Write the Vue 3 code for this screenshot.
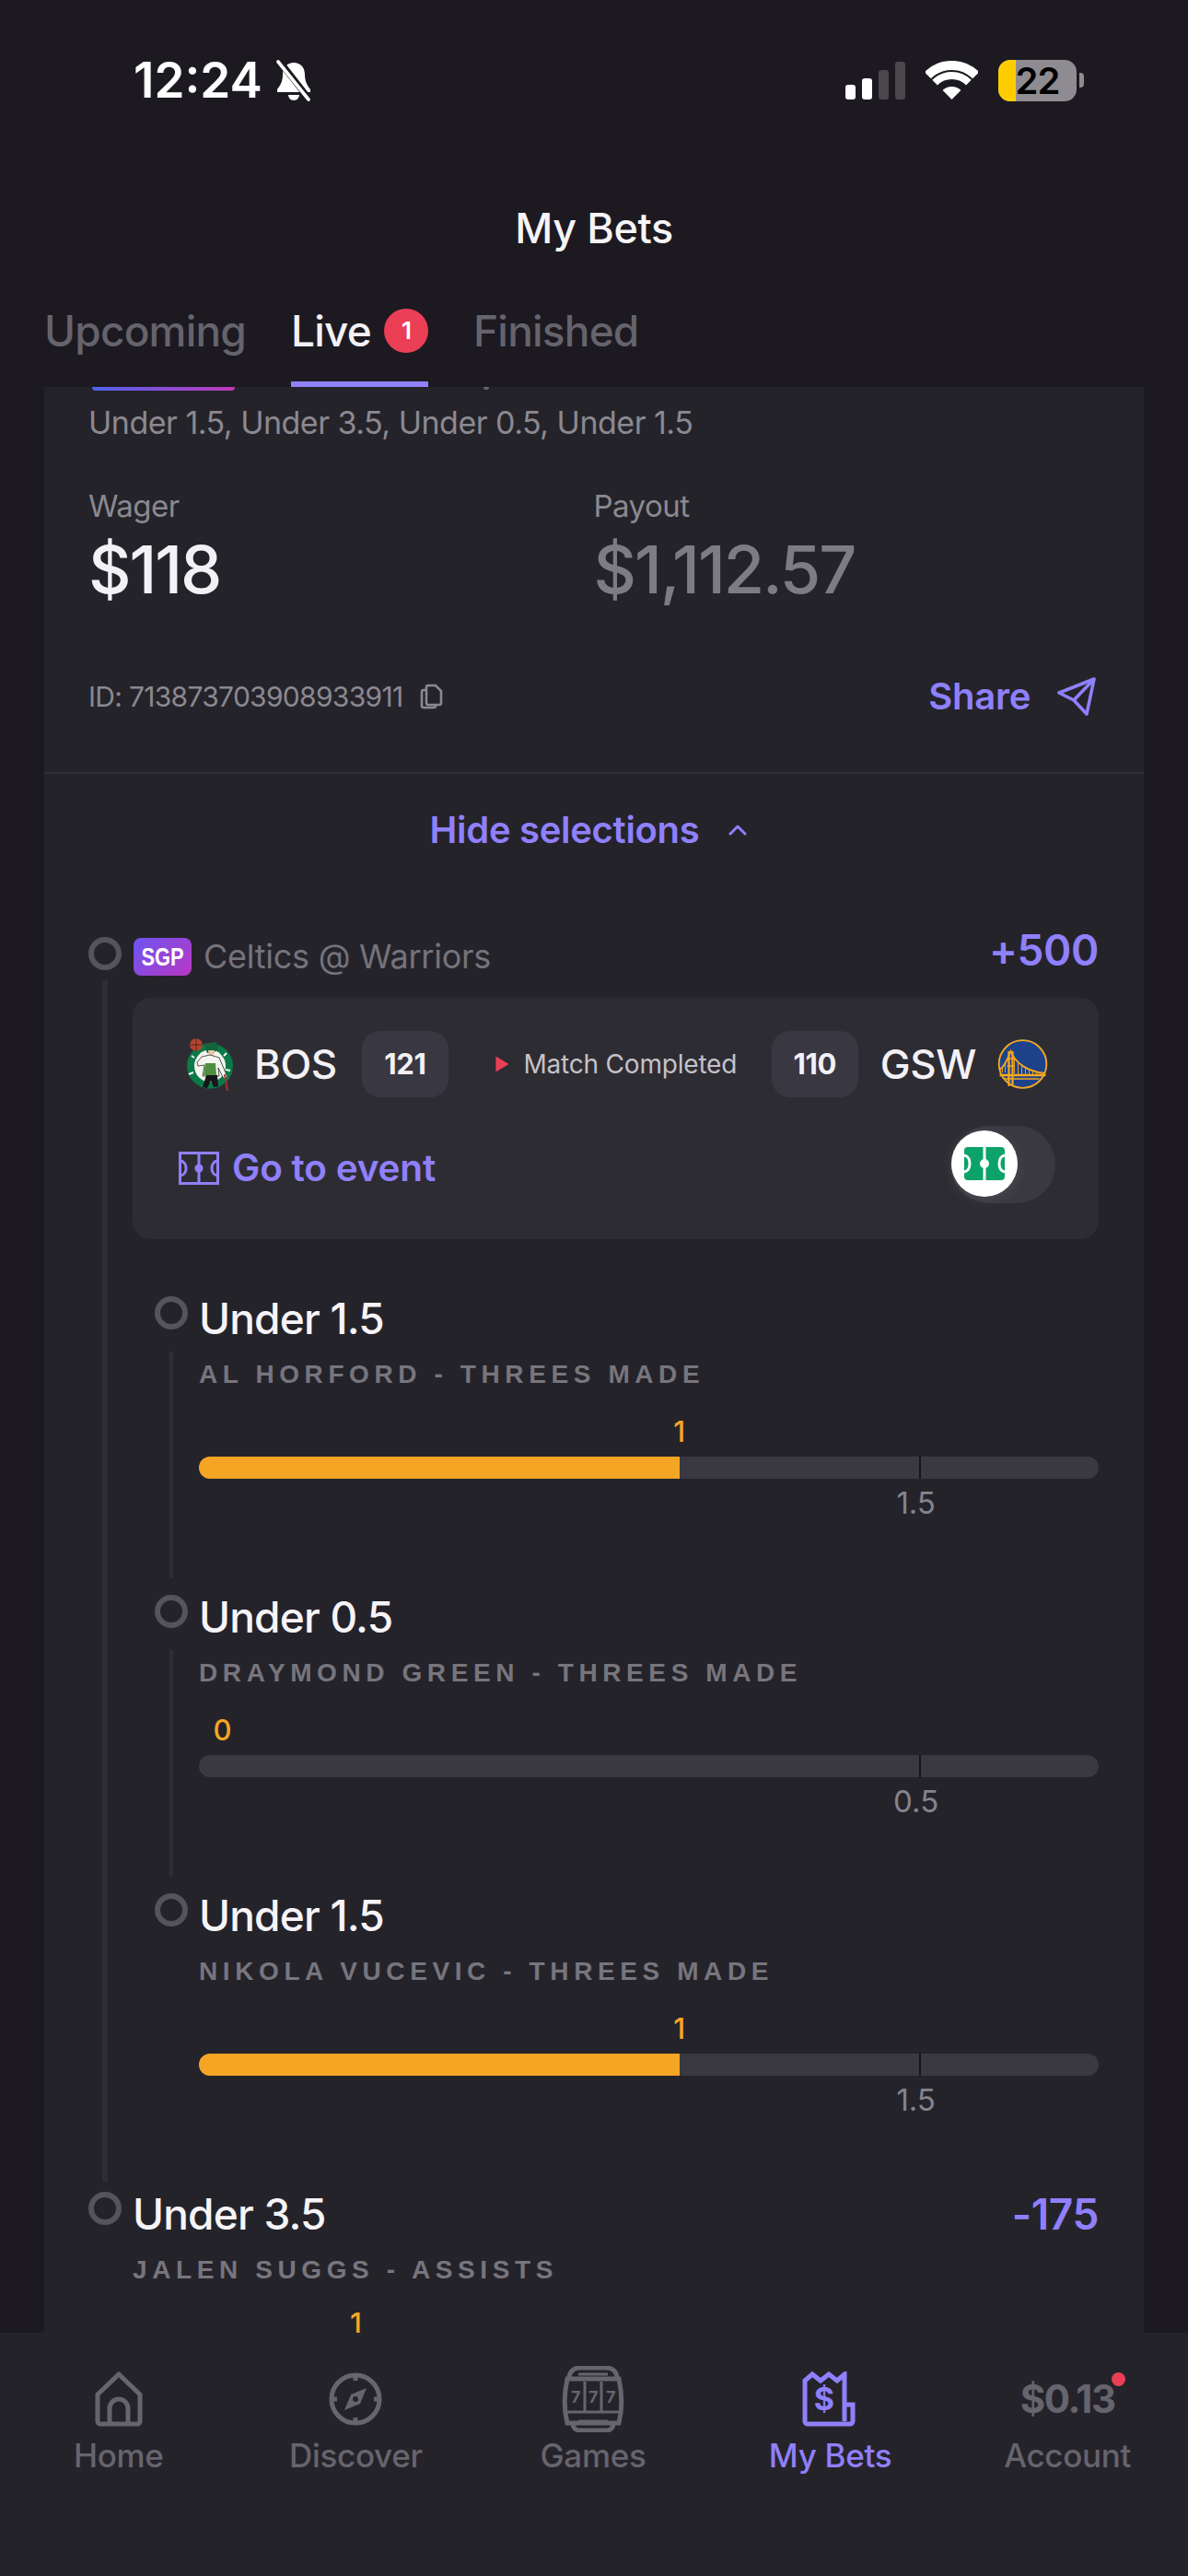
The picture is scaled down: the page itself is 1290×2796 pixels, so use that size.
<script setup>
const legs = [
  { line: 'Under 1.5', name: 'AL HORFORD - THREES MADE', value: '1', pct: 53.4, pos: 53.4, target: '1.5' },
  { line: 'Under 0.5', name: 'DRAYMOND GREEN - THREES MADE', value: '0', pct: 0, pos: 2.6, target: '0.5' },
  { line: 'Under 1.5', name: 'NIKOLA VUCEVIC - THREES MADE', value: '1', pct: 53.4, pos: 53.4, target: '1.5' },
]
const tabs = [
  { id: 'home', label: 'Home' },
  { id: 'discover', label: 'Discover' },
  { id: 'games', label: 'Games' },
  { id: 'bets', label: 'My Bets' },
  { id: 'account', label: 'Account' },
]
</script>

<template>
  <div class="phone">
    <header class="top">
      <div class="status">
        <div class="time-wrap">
          <span class="time">12:24</span>
          <svg viewBox="0 0 43 45" width="43" height="45">
            <path d="M21 3c-7 0-12 5-12 13 0 8-3 12-6 16v3h36v-3c-3-4-6-8-6-16 0-8-5-13-12-13z" fill="#fff"/>
            <path d="M15 38a6 6 0 0 0 12 0z" fill="#fff"/>
            <path d="M6 2l32 41" stroke="#1c1a20" stroke-width="7"/>
            <path d="M4 2l33 41" stroke="#fff" stroke-width="3.6" stroke-linecap="round"/>
          </svg>
        </div>
        <div class="sys">
          <svg viewBox="0 0 65 41" width="65" height="41">
            <rect x="0" y="25" width="11" height="16" rx="3" fill="#fff"/>
            <rect x="18" y="18" width="11" height="23" rx="3" fill="#fff"/>
            <rect x="36" y="9" width="11" height="32" rx="3" fill="#4a484d"/>
            <rect x="54" y="0" width="11" height="41" rx="3" fill="#4a484d"/>
          </svg>
          <svg viewBox="0 0 57 42" width="57" height="42">
            <path d="M2.3 15.8A37 37 0 0 1 54.7 15.8" fill="none" stroke="#fff" stroke-width="10"/>
            <path d="M10.1 23.6A26 26 0 0 1 46.9 23.6" fill="none" stroke="#fff" stroke-width="8"/>
            <path d="M28.5 42 18.6 32.1A14 14 0 0 1 38.4 32.1z" fill="#fff"/>
          </svg>
          <div class="battery">
            <div class="battery-body"><span class="battery-fill"></span><span class="battery-num">22</span></div>
            <span class="battery-cap"></span>
          </div>
        </div>
      </div>
      <h1 class="title">My Bets</h1>
      <nav class="tabs">
        <span class="tab">Upcoming</span>
        <span class="tab active">Live <b class="count">1</b></span>
        <span class="tab">Finished</span>
      </nav>
    </header>

    <main class="scroll">
      <section class="card">
        <div class="peek"><span class="peek-bar"></span><span class="peek-dot"></span></div>
        <p class="summary">Under 1.5, Under 3.5, Under 0.5, Under 1.5</p>
        <div class="money">
          <div class="money-col">
            <span class="money-label">Wager</span>
            <span class="money-value">$118</span>
          </div>
          <div class="money-col">
            <span class="money-label">Payout</span>
            <span class="money-value dim">$1,112.57</span>
          </div>
        </div>
        <div class="id-row">
          <span class="id">ID: 713873703908933911</span>
          <svg class="copy" viewBox="0 0 28 30" width="28" height="30" fill="none" stroke="#8b8990" stroke-width="2.6">
            <path d="M10 3h8l6 6v13a2 2 0 0 1-2 2H10a2 2 0 0 1-2-2V5a2 2 0 0 1 2-2z"/>
            <path d="M8 8H5a2 2 0 0 0-2 2v15a2 2 0 0 0 2 2h11a2 2 0 0 0 2-2v-1"/>
          </svg>
          <span class="share">Share</span>
          <svg class="plane" viewBox="0 0 44 44" width="44" height="44" fill="none" stroke="#8f80fb" stroke-width="3.6" stroke-linejoin="round">
            <path d="M41 3 3 18l16 8 14 15z"/>
            <path d="M19 26 41 3"/>
          </svg>
        </div>
        <div class="hide-row">
          <span>Hide selections</span>
          <svg viewBox="0 0 20 12" width="20" height="12" fill="none" stroke="#8f80fb" stroke-width="3" stroke-linecap="round" stroke-linejoin="round"><path d="M2 10l8-8 8 8"/></svg>
        </div>

        <div class="parlay">
          <div class="rail-node"></div>
          <div class="parlay-main">
            <div class="parlay-head">
              <span class="sgp"><span>SGP</span></span>
              <span class="matchup">Celtics @ Warriors</span>
              <span class="odds top-odds">+500</span>
            </div>
            <div class="game">
              <div class="score-row">
                <svg class="logo" viewBox="0 0 52 58" width="52" height="58">
                  <ellipse cx="26" cy="31" rx="25" ry="24.5" fill="#0b7a47"/>
                  <ellipse cx="26" cy="31" rx="17" ry="17.5" fill="#f5f5f0"/>
                  <path d="M3 40l5-2M6 20l3 2M44 17l-3 3M48 36l-5-1" stroke="#f5f5f0" stroke-width="2"/>
                  <path d="M19 7 33 5l2 7-5 5h-7z" fill="#14633b"/>
                  <path d="M24 14h7l-1 7h-5z" fill="#e8c9a8"/>
                  <path d="M17 21l9-2 10 3 9 21-4 2-6-12 1 9H18l2-12-7 1-1-4z" fill="#f5f5f0" stroke="#26302a" stroke-width=".8"/>
                  <path d="M21 28h11l1 13H19z" fill="#4d8f3f"/>
                  <path d="M22 41h12l1 12-5 1-3-7-4 8-5-1z" fill="#14161a"/>
                  <circle cx="11" cy="8" r="6.8" fill="#b2462e"/>
                  <path d="M5 8h12M11 1v14" stroke="#5e2217" stroke-width="1"/>
                  <path d="M42 40l3 18" stroke="#a33232" stroke-width="2"/>
                </svg>
                <span class="abbr">BOS</span>
                <span class="score">121</span>
                <span class="state"><i class="tri"></i>Match Completed</span>
                <span class="score">110</span>
                <span class="abbr">GSW</span>
                <svg class="logo" viewBox="0 0 56 56" width="57" height="56">
                  <circle cx="28" cy="28" r="27" fill="#1d428a"/>
                  <circle cx="28" cy="28" r="25.8" fill="none" stroke="#f6a81c" stroke-width="1.8"/>
                  <path d="M13 14v38M17 14v38" stroke="#f6a81c" stroke-width="2.2"/>
                  <path d="M11 22h8M11 30h8" stroke="#f6a81c" stroke-width="1.4"/>
                  <path d="M3 34C8 31 11 24 15 14c5 13 18 22 37 24" fill="none" stroke="#f6a81c" stroke-width="1.8"/>
                  <path d="M19 20v18M23 25v14M27 29v10M31 32v7M35 34v5M39 35v4M43 37v2M9 28v9M6 31v6" stroke="#f6a81c" stroke-width=".9"/>
                  <path d="M3 40h50" stroke="#f6a81c" stroke-width="2.6"/>
                  <path d="M8 44h38" stroke="#f6a81c" stroke-width="1.4"/>
                </svg>
              </div>
              <div class="event-row">
                <svg class="event-icon" viewBox="0 0 44 36" width="44" height="36" fill="none" stroke="#8f80fb" stroke-width="3">
                  <rect x="1.5" y="1.5" width="41" height="33"/>
                  <path d="M22 2v32M2 10c8 1 8 15 0 16M42 10c-8 1-8 15 0 16"/>
                  <circle cx="22" cy="18" r="4.6" fill="#8f80fb" stroke="none"/>
                </svg>
                <span class="event">Go to event</span>
                <div class="toggle">
                  <span class="knob">
                    <svg viewBox="0 0 44 36" width="44" height="36">
                      <rect x="0" y="0" width="44" height="36" rx="4" fill="#0ca36a"/>
                      <path d="M22 0v36M0 9c8 1 8 17 0 18M44 9c-8 1-8 17 0 18" fill="none" stroke="#fff" stroke-width="3"/>
                      <circle cx="22" cy="18" r="5" fill="#fff"/>
                    </svg>
                  </span>
                </div>
              </div>
            </div>

            <div v-for="(leg, i) in legs" :key="i" class="leg">
              <div class="leg-rail">
                <span class="node"></span>
                <span v-if="i < 2" class="rail-line"></span>
              </div>
              <div class="leg-body">
                <div class="leg-line">{{ leg.line }}</div>
                <div class="leg-name">{{ leg.name }}</div>
                <div class="bar-value-row">
                  <span class="bar-value" :style="{ left: leg.pos + '%' }">{{ leg.value }}</span>
                </div>
                <div class="bar">
                  <span class="bar-fill" :style="{ width: leg.pct + '%' }"></span>
                  <span class="tick"></span>
                </div>
                <div class="target-row"><span class="target">{{ leg.target }}</span></div>
              </div>
            </div>
          </div>
        </div>

        <div class="parlay second">
          <div class="rail-node"></div>
          <div class="parlay-main">
            <div class="second-head">
              <span class="leg-line">Under 3.5</span>
              <span class="odds">-175</span>
            </div>
            <div class="leg-name">JALEN SUGGS - ASSISTS</div>
            <div class="last-value">1</div>
          </div>
        </div>
      </section>
    </main>

    <footer class="nav">
      <div v-for="t in tabs" :key="t.id" class="nav-item" :class="{ on: t.id === 'bets' }">
        <div class="nav-icon">
          <svg v-if="t.id === 'home'" viewBox="0 0 54 60" width="54" height="60" fill="none" stroke="#66646d" stroke-width="5" stroke-linejoin="round">
            <path d="M27 3 4 25v29a3 3 0 0 0 3 3h40a3 3 0 0 0 3-3V25z"/>
            <path d="M17 56V40a10 10 0 0 1 20 0v16"/>
          </svg>
          <svg v-else-if="t.id === 'discover'" viewBox="0 0 60 60" width="60" height="60" fill="none" stroke="#66646d" stroke-width="5">
            <circle cx="30" cy="30" r="26"/>
            <path d="M30 2v8M30 50v8M2 30h8M50 30h8"/>
            <path d="M42 18 35 35l-17 7 7-17z" fill="#66646d" stroke="none"/>
            <circle cx="30" cy="30" r="3" fill="#25232a" stroke="none"/>
          </svg>
          <svg v-else-if="t.id === 'games'" viewBox="0 0 68 72" width="68" height="72" fill="none" stroke="#66646d" stroke-width="5">
            <path d="M8 14C8 5 14 2 20 2h28c6 0 12 3 12 12M6 14h56c4 18 4 32 0 48H6C2 46 2 32 6 14z"/>
            <path d="M18 9h32" stroke-width="3"/>
            <path d="M25 17v33M43 17v33M5 50h58" stroke-width="3"/>
            <path d="M12 62c0 6 4 8 8 8h28c4 0 8-2 8-8"/>
            <path d="M18 60h32" stroke-width="3"/>
            <text x="10" y="40" class="seven">7</text>
            <text x="29" y="40" class="seven">7</text>
            <text x="48" y="40" class="seven">7</text>
          </svg>
          <svg v-else-if="t.id === 'bets'" viewBox="0 0 62 60" width="62" height="60" fill="none" stroke="#8f80fb" stroke-width="5">
            <path d="M46 40V3l-8 7-9-7-9 7-9-7-8 7v44a3 3 0 0 0 3 3h46a3 3 0 0 0 3-3V36H46v18"/>
            <text x="24" y="42" class="dollar" text-anchor="middle">$</text>
          </svg>
          <span v-else class="balance">$0.13<i class="dot"></i></span>
        </div>
        <span class="nav-label">{{ t.label }}</span>
      </div>
    </footer>
  </div>
</template>

<style scoped>
.phone {
  width: 1290px;
  height: 2796px;
  display: flex;
  flex-direction: column;
  overflow: hidden;
  background: #1c1a20;
  font-family: Inter, "Liberation Sans", sans-serif;
  color: #f3f1f6;
}
.top { height: 420px; flex: none; display: flex; flex-direction: column; }
.status {
  height: 220px;
  padding: 55px 113px 0 145px;
  box-sizing: border-box;
  display: flex;
  justify-content: space-between;
  align-items: flex-start;
}
.time-wrap { display: flex; align-items: center; gap: 13px; height: 64px; }
.time { font: 600 53px/64px Inter, sans-serif; color: #fff; }
.sys { display: flex; align-items: center; gap: 22px; height: 64px; }
.battery { display: flex; align-items: center; gap: 3px; }
.battery-body {
  width: 85px; height: 45px; border-radius: 13px; background: #8e8c91; position: relative;
  display: flex; align-items: center; justify-content: center;
}
.battery-fill { position: absolute; left: 0; top: 0; bottom: 0; width: 19px; border-radius: 13px 0 0 13px; background: #ffcc00; }
.battery-num { position: relative; font: 600 40px/45px Inter, sans-serif; color: #000; letter-spacing: -1px; }
.battery-cap { width: 5px; height: 16px; border-radius: 0 4px 4px 0; background: #8e8c91; }
.title { margin: 0; height: 56px; text-align: center; font: 500 45px/56px Inter, sans-serif; color: #f6f4f8; letter-spacing: -.4px; }
.tabs { display: flex; gap: 49px; padding-left: 48px; margin-top: 51px; height: 93px; box-sizing: border-box; }
.tab { font: 500 46px/64px Inter, sans-serif; color: #65636c; display: flex; align-items: flex-start; gap: 14px; height: 93px; box-sizing: border-box; letter-spacing: -.8px; }
.tab.active { color: #f3f1f6; border-bottom: 6px solid #8f80fb; }
.count {
  width: 48px; height: 48px; margin-top: 8px; border-radius: 50%; background: #ea3f55; color: #fff;
  font: 600 26px/48px Inter, sans-serif; text-align: center;
}
.scroll { flex: 1; min-height: 0; overflow: hidden; }
.card {
  margin: 0 48px;
  background: #25232a;
  padding: 0 49px 0 48px;
  height: 2400px;
  box-sizing: border-box;
}
.peek { height: 4px; display: flex; }
.peek-bar { display: block; margin-left: 4px; width: 155px; height: 4px; border-radius: 0 0 4px 4px; background: linear-gradient(90deg, #4f63f0, #c03ab8); }
.peek-dot { width: 6px; height: 3px; margin-left: 270px; border-radius: 0 0 3px 3px; background: #6b6970; }
.summary { margin: 13px 0 0; font: 400 34px/44px Inter, sans-serif; color: #8b8990; letter-spacing: -.5px; }
.money { display: flex; margin-top: 46px; }
.money-col { width: 549px; display: flex; flex-direction: column; }
.money-label { font: 400 33px/44px Inter, sans-serif; color: #8b8990; letter-spacing: -.5px; }
.money-value { font: 500 72px/84px Inter, sans-serif; color: #f3f1f6; letter-spacing: -2.1px; margin-top: 5px; }
.money-value.dim { color: #7d7b83; }
.id-row { display: flex; align-items: center; margin-top: 68px; height: 56px; }
.id { font: 400 30px/36px Inter, sans-serif; color: #8b8990; letter-spacing: -.7px; }
.copy { margin-left: 18px; }
.share { margin-left: auto; margin-right: 28px; font: 600 40px/48px Inter, sans-serif; color: #8f80fb; letter-spacing: -.3px; }
.plane { margin-right: 2px; }
.hide-row {
  margin: 54px -49px 0 -48px;
  border-top: 2px solid #302e35;
  height: 124px;
  padding-right: 12px;
  box-sizing: border-box;
  display: flex; align-items: center; justify-content: center; gap: 32px;
  font: 600 40px/48px Inter, sans-serif; color: #8f80fb; letter-spacing: -.3px;
}
.parlay { display: flex; position: relative; margin-top: 55px; }
.rail-node { width: 36px; height: 36px; box-sizing: border-box; border: 6px solid #55535b; border-radius: 50%; flex: none; position: absolute; left: 0; top: 0; }
.parlay:not(.second)::before { content: ""; position: absolute; left: 15px; top: 46px; bottom: 11px; width: 6px; background: #2f2d34; }
.parlay-main { margin-left: 48px; flex: 1; min-width: 0; }
.parlay-head { display: flex; align-items: center; height: 42px; }
.sgp {
  width: 63px; height: 41px; border-radius: 8px; background: linear-gradient(135deg, #6c55f2, #b937c2);
  font: 700 28px/41px "Liberation Sans", sans-serif; color: #fff; text-align: center; margin-left: 1px; flex: none;
}
.sgp span { display: inline-block; transform: scaleX(.78); }
.matchup { margin-left: 13px; font: 400 36px/42px Inter, sans-serif; color: #75737b; letter-spacing: -.25px; }
.odds { margin-left: auto; font: 600 46px/50px Inter, sans-serif; color: #8f80fb; letter-spacing: -.4px; }
.top-odds { margin-bottom: 14px; }
.game { margin-top: 24px; height: 262px; border-radius: 20px; background: #2e2c33; padding: 36px 54px 0 58px; box-sizing: border-box; }
.score-row { display: flex; align-items: center; height: 72px; }
.abbr { font: 500 44px/52px Inter, sans-serif; color: #f3f1f6; letter-spacing: -.4px; }
.logo { flex: none; }
.logo + .abbr { margin-left: 22px; }
.abbr + .score { margin-left: 27px; }
.score { width: 94px; height: 72px; border-radius: 20px; background: #393741; text-align: center; font: 700 31px/72px Inter, sans-serif; color: #f3f1f6; letter-spacing: -.3px; flex: none; }
.state { flex: 1; display: flex; align-items: center; justify-content: center; padding-left: 14px; font: 400 28px/36px Inter, sans-serif; color: #c4c2c8; letter-spacing: -.2px; }
.tri { width: 14px; height: 17px; margin-right: 16px; background: #ea3f55; clip-path: polygon(0 0, 100% 50%, 0 100%); }
.score + .abbr { margin-left: 24px; }
.abbr + .logo { margin-left: 22px; }
.event-row { display: flex; align-items: center; margin-top: 31px; height: 84px; margin-left: -8px; margin-right: -7px; }
.event-icon { margin-top: 8px; }
.event { margin: 8px 0 0 14px; font: 600 40.5px/48px Inter, sans-serif; color: #8f80fb; letter-spacing: -.2px; }
.toggle { margin-left: auto; width: 114px; height: 84px; border-radius: 42px; background: #3a3841; position: relative; }
.knob { position: absolute; left: 1px; top: 5px; width: 72px; height: 72px; border-radius: 50%; background: #fff; display: flex; align-items: center; justify-content: center; box-shadow: 0 2px 14px rgba(255,255,255,.1); }
.leg { display: flex; margin-left: 24px; height: 324px; }
.leg-rail { width: 36px; flex: none; position: relative; margin-right: 12px; }
.node { position: absolute; left: 0; top: 0; width: 36px; height: 36px; box-sizing: border-box; border: 6px solid #55535b; border-radius: 50%; }
.rail-line { position: absolute; left: 16px; top: 60px; bottom: 18px; width: 4px; background: #302e35; }
.leg-body { flex: 1; min-width: 0; margin-top: -6px; }
.game + .leg { margin-top: 62px; }
.leg-line { font: 500 46px/60px Inter, sans-serif; color: #f6f4f8; letter-spacing: -.8px; }
.leg-name { font: 700 28px/36px "Liberation Sans", sans-serif; color: #77757d; letter-spacing: 5.6px; margin-top: 13px; }
.bar-value-row { position: relative; height: 42px; margin-top: 23px; }
.bar-value { position: absolute; top: 0; transform: translateX(-50%); font: 500 31px/42px Inter, sans-serif; color: #f5a524; }
.bar { position: relative; height: 24px; border-radius: 12px; background: #3a3841; overflow: hidden; margin-top: 6px; }
.bar-fill { display: block; height: 100%; background: #f5a524; }
.tick { position: absolute; left: 80%; top: 0; bottom: 0; width: 2px; background: #17151b; }
.target-row { position: relative; height: 42px; margin-top: 5px; }
.target { position: absolute; left: 79.7%; top: 0; transform: translateX(-50%); font: 400 33px/42px Inter, sans-serif; color: #85838c; }
.second { margin-top: -6px; }
.second .rail-node { top: 6px; }
.second-head { display: flex; align-items: center; height: 60px; }
.last-value { font: 500 31px/42px Inter, sans-serif; color: #f5a524; margin-left: 236px; margin-top: 19px; }
.nav {
  height: 264px; flex: none; background: #25232a; display: grid; grid-template-columns: repeat(5, 1fr);
  padding: 19px 2px 0 0; box-sizing: border-box; align-items: start;
}
.nav-item { display: flex; flex-direction: column; align-items: center; }
.nav-icon { height: 86px; display: flex; align-items: center; justify-content: center; margin-top: 10px; }
.nav-label { font: 500 35px/48px Inter, sans-serif; color: #66646d; margin-top: -6px; letter-spacing: -.3px; }
.nav-item.on .nav-label { color: #8f80fb; }
.seven { font: 700 18px Inter, sans-serif; fill: #66646d; stroke: none; }
.dollar { font: 700 34px Inter, sans-serif; fill: #8f80fb; stroke: none; }
.balance { font: 700 42px/50px Inter, sans-serif; color: #66646d; position: relative; letter-spacing: -1.4px; }
.dot { position: absolute; right: -11px; top: -4px; width: 15px; height: 15px; border-radius: 50%; background: #ea3f55; }
</style>
<style>
html, body { margin: 0; padding: 0; background: #1c1a20; }
</style>
